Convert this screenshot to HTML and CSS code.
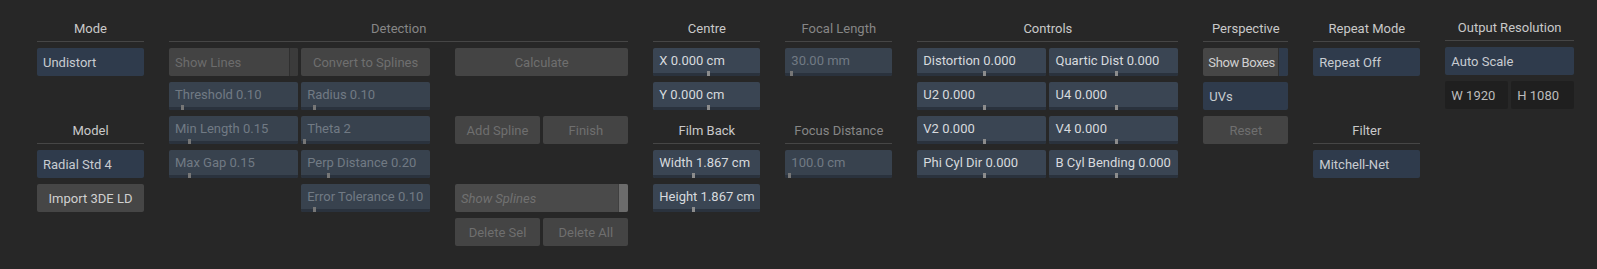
FILE: index.html
```html
<!DOCTYPE html>
<html lang="en">
<head>
    <meta charset="UTF-8">
    <title>Lens Distortion</title>
    <link rel="stylesheet" href="styles.css">
</head>
<body>

    <div class="panel">

        <!-- Mode / Model -->
        <div class="col w-md">
            <div class="head">Mode</div>
            <div class="btn blue">Undistort</div>
            <div class="gap-cell"></div>
            <div class="head">Model</div>
            <div class="btn blue">Radial Std 4</div>
            <div class="btn grey center">Import 3DE LD</div>
        </div>

        <!-- Detection -->
        <div class="col w-det">
            <div class="head off">Detection</div>
            <div class="det-body">
                <div class="pairs">
                    <div class="toggle dim"><span>Show Lines</span><i class="flag"></i></div>
                    <div class="btn grey dim center">Convert to Splines</div>
                    <div class="slider dim" style="--v:0.095">Threshold 0.10</div>
                    <div class="slider dim" style="--v:0.098">Radius 0.10</div>
                    <div class="slider dim" style="--v:0.153">Min Length 0.15</div>
                    <div class="slider dim" style="--v:0.016">Theta 2</div>
                    <div class="slider dim" style="--v:0.153">Max Gap 0.15</div>
                    <div class="slider dim" style="--v:0.204">Perp Distance 0.20</div>
                    <div class="gap-cell"></div>
                    <div class="slider dim" style="--v:0.098">Error Tolerance 0.10</div>
                </div>
                <div class="col w-lg">
                    <div class="btn grey dim center">Calculate</div>
                    <div class="gap-cell"></div>
                    <div class="split">
                        <div class="btn grey dim center">Add Spline</div>
                        <div class="btn grey dim center">Finish</div>
                    </div>
                    <div class="gap-cell"></div>
                    <div class="toggle splines"><span>Show Splines</span><i class="flag"></i></div>
                    <div class="split">
                        <div class="btn grey dim center">Delete Sel</div>
                        <div class="btn grey dim center">Delete All</div>
                    </div>
                </div>
            </div>
        </div>

        <!-- Centre / Film Back -->
        <div class="col w-md">
            <div class="head">Centre</div>
            <div class="slider" style="--v:0.516">X 0.000 cm</div>
            <div class="slider" style="--v:0.516">Y 0.000 cm</div>
            <div class="head">Film Back</div>
            <div class="slider" style="--v:0.375">Width 1.867 cm</div>
            <div class="slider" style="--v:0.375">Height 1.867 cm</div>
        </div>

        <!-- Focal / Focus -->
        <div class="col w-md">
            <div class="head off">Focal Length</div>
            <div class="slider dim" style="--v:0.048">30.00 mm</div>
            <div class="gap-cell"></div>
            <div class="head off">Focus Distance</div>
            <div class="slider dim" style="--v:0.029">100.0 cm</div>
        </div>

        <!-- Controls -->
        <div class="col w-pair">
            <div class="head">Controls</div>
            <div class="pairs">
                <div class="slider" style="--v:0.52">Distortion 0.000</div>
                <div class="slider" style="--v:0.52">Quartic Dist 0.000</div>
                <div class="slider" style="--v:0.52">U2 0.000</div>
                <div class="slider" style="--v:0.52">U4 0.000</div>
                <div class="slider" style="--v:0.52">V2 0.000</div>
                <div class="slider" style="--v:0.52">V4 0.000</div>
                <div class="slider" style="--v:0.52">Phi Cyl Dir 0.000</div>
                <div class="slider" style="--v:0.52">B Cyl Bending 0.000</div>
            </div>
        </div>

        <!-- Perspective -->
        <div class="col w-sm">
            <div class="head">Perspective</div>
            <div class="toggle on"><span>Show Boxes</span><i class="flag"></i></div>
            <div class="btn blue">UVs</div>
            <div class="btn grey dim center">Reset</div>
        </div>

        <!-- Repeat / Filter -->
        <div class="col w-md">
            <div class="head">Repeat Mode</div>
            <div class="btn blue">Repeat Off</div>
            <div class="gap-cell"></div>
            <div class="head">Filter</div>
            <div class="btn blue">Mitchell-Net</div>
        </div>

        <!-- Output -->
        <div class="col w-out raised">
            <div class="head">Output Resolution</div>
            <div class="btn blue">Auto Scale</div>
            <div class="split">
                <div class="field">W 1920</div>
                <div class="field">H 1080</div>
            </div>
        </div>

    </div>

</body>
</html>
```

FILE: styles.css
```css
/* base */
* {
    margin: 0;
    padding: 0;
    box-sizing: border-box;
}

body {
    background-color: #272727;
    color: #cfd1d4;
    font-family: Roboto, "Noto Sans", sans-serif;
    font-size: 13px;
}

.panel {
    display: flex;
    align-items: flex-start;
    gap: 25px;
    padding: 14px 0 0 37px;
}

/* columns */
.col {
    display: flex;
    flex-direction: column;
    gap: 6px;
}

.w-sm { width: 85px; }
.w-md { width: 107px; }
.w-lg { width: 173.33px; }
.w-out { width: 128.67px; }
.w-pair { width: 261px; }
.w-det { width: 459.33px; }

.raised {
    margin-top: -1px;
}

.col > div,
.pairs > div,
.split > div {
    height: 28px;
}

.gap-cell {
    height: 28px;
}

/* section headings */
.head {
    text-align: center;
    line-height: 29px;
    color: #c9c9c9;
    border-bottom: 1px solid #464646;
    white-space: nowrap;
}

.head.off {
    color: #868686;
}

.det-body {
    display: flex;
    gap: 25px;
    height: auto !important;
}

.pairs {
    display: grid;
    grid-template-columns: 1fr 1fr;
    grid-auto-rows: 28px;
    gap: 6px 3.33px;
    width: 261px;
    height: auto !important;
}

.split {
    display: grid;
    grid-template-columns: 1fr 1fr;
    gap: 3.33px;
}

/* buttons */
.btn {
    border-radius: 2px;
    padding: 0 6px;
    line-height: 29px;
    white-space: nowrap;
    overflow: hidden;
}

.btn.center {
    text-align: center;
}

.blue {
    background-color: #2f3b4c;
    color: #c8ccd1;
}

.grey {
    background-color: #464646;
    color: #d0d0d0;
}

.grey.dim {
    background-color: #444444;
    color: #6f6f6f;
}

.field {
    background-color: #1f1f1f;
    color: #bcbcbc;
    border-radius: 2px;
    padding: 0 6px;
    line-height: 29px;
}

/* toggles */
.toggle {
    display: flex;
    border-radius: 2px;
    overflow: hidden;
    background-color: #464646;
    color: #d0d0d0;
}

.toggle span {
    flex: 1;
    padding: 0 0 0 6px;
    line-height: 29px;
    white-space: nowrap;
}

.toggle .flag {
    flex: none;
    width: 9px;
    border-left: 1px solid #2f2f2f;
    background-color: #3b3b3b;
}

.toggle.dim {
    background-color: #434343;
    color: #6c6c6c;
}

.toggle.on span {
    padding-left: 5px;
    letter-spacing: -0.4px;
}

.toggle.on .flag {
    width: 10px;
    background-color: #2f3b4c;
}

.toggle.splines {
    background-color: #4a4a4a;
    color: #717171;
    font-style: italic;
}

.toggle.splines .flag {
    width: 10px;
    border-left-color: #404040;
    background-color: #6c6c6c;
}

/* sliders */
.slider {
    position: relative;
    border-radius: 2px;
    overflow: hidden;
    background-color: #3a4553;
    color: #d7dade;
    padding: 0 6px;
    line-height: 26px;
    white-space: nowrap;
}

.slider::after {
    content: "";
    position: absolute;
    left: 0;
    right: 0;
    bottom: 0;
    height: 3px;
    background-color: #2a323d;
}

.slider::before {
    content: "";
    position: absolute;
    z-index: 1;
    bottom: 0;
    left: calc(var(--v) * (100% - 3px));
    width: 3px;
    height: 5px;
    background-color: #8c8c8c;
}

.slider.dim {
    background-color: #38424e;
    color: #717a84;
}

.slider.dim::before {
    background-color: #767676;
}
```
